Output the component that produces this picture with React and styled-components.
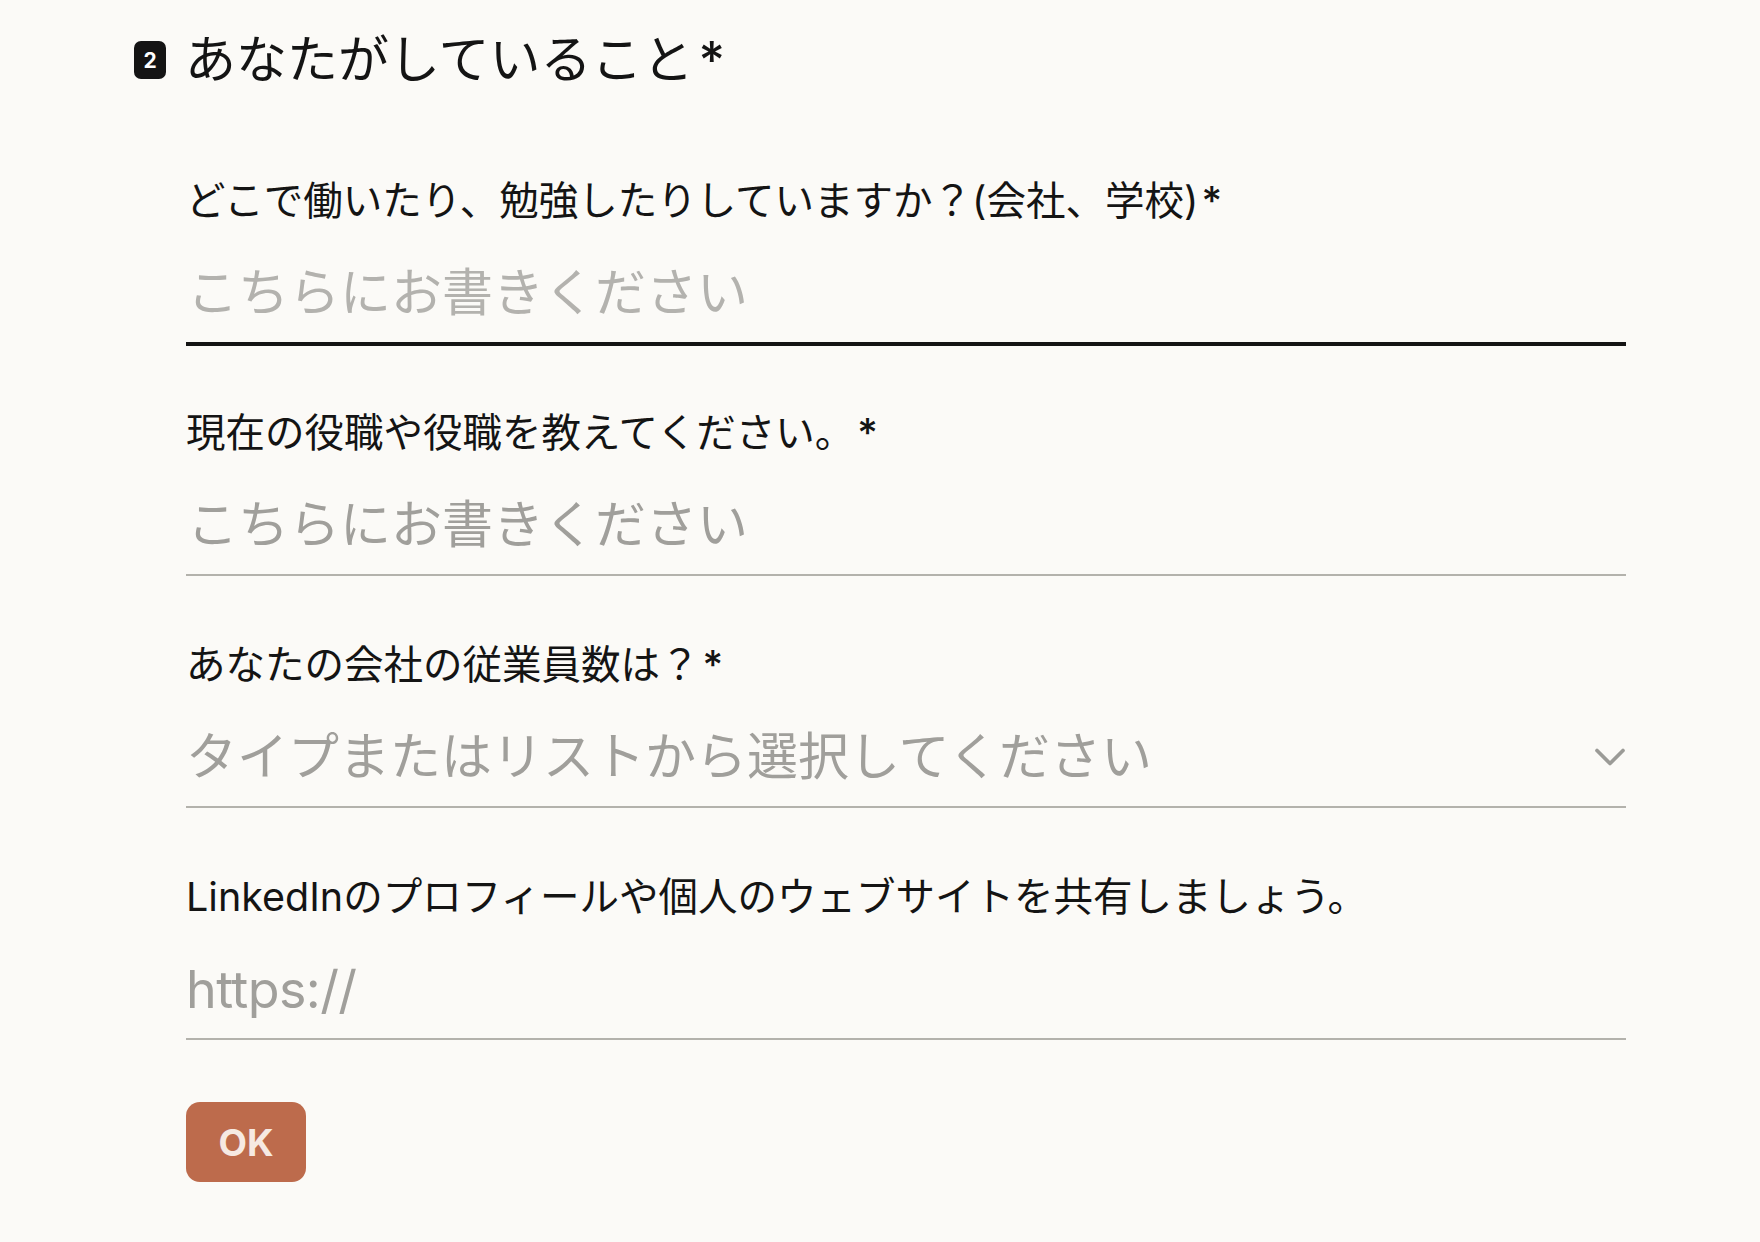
import React from 'react'
import styled, { createGlobalStyle } from 'styled-components'
import { ChevronDown } from 'lucide-react'

const GlobalStyle = createGlobalStyle`
  html, body {
    margin: 0;
    padding: 0;
    background: #fbfaf7;
  }
  body {
    font-family: Inter, "Noto Sans CJK JP", sans-serif;
    color: #141414;
  }
`

const Page = styled.div`
  width: 1760px;
  height: 1242px;
  overflow: hidden;
  padding: 28px 0 0 134px;
  box-sizing: border-box;
`

const Heading = styled.div`
  display: flex;
  align-items: center;
  height: 64px;
`

const Badge = styled.span`
  display: flex;
  align-items: center;
  justify-content: center;
  width: 32px;
  height: 38px;
  margin-right: 19px;
  border-radius: 7px;
  background: #141414;
  color: #fff;
  font-size: 21px;
  font-weight: 700;
`

const Title = styled.h1`
  margin: 0;
  font-size: 51px;
  font-weight: 400;
  line-height: 64px;
`

const Star = styled.span`
  margin-left: ${p => p.$gap || 3}px;
  font-weight: 500;
`

const Form = styled.div`
  width: 1440px;
  margin: 83px 0 0 52px;
  display: flex;
  flex-direction: column;
  gap: 63px;
`

const Field = styled.div`
  display: flex;
  flex-direction: column;
`

const Label = styled.div`
  font-size: 39.5px;
  font-weight: 400;
  line-height: 52px;
  white-space: nowrap;
`

const InputRow = styled.div`
  display: flex;
  align-items: center;
  justify-content: space-between;
  height: ${p => (p.$active ? 119 : 117)}px;
  margin-bottom: ${p => (p.$active ? -2 : 0)}px;
  padding: ${p => p.$top || 8}px 0 0 ${p => p.$left || 0}px;
  box-sizing: border-box;
  border-bottom: ${p => (p.$active ? '4px solid #141414' : '2px solid #b3b2ac')};
  color: ${p => (p.$active ? '#b3b2ae' : '#a09f9b')};
  font-size: ${p => p.$size || 51}px;
  font-weight: 400;
  letter-spacing: ${p => p.$tight || 0}px;
`

const Arrow = styled(ChevronDown)`
  width: 52px;
  height: 52px;
  margin: 8px -10px 0 0;
  color: #9b9b97;
`

const OkButton = styled.button`
  width: 120px;
  height: 80px;
  margin-top: -1px;
  padding: 0;
  border: 0;
  border-radius: 14px;
  background: #bd6b4c;
  color: #f6e9e2;
  font-family: Inter, sans-serif;
  font-size: 37px;
  font-weight: 700;
`

const App = () => {
  return (
    <>
      <GlobalStyle />
      <Page>
        <Heading>
          <Badge>2</Badge>
          <Title>あなたがしていること<Star $gap={5}>*</Star></Title>
        </Heading>
        <Form>
          <Field>
            <Label>どこで働いたり、勉強したりしていますか？(会社、学校)<Star>*</Star></Label>
            <InputRow $active $left={1}>こちらにお書きください</InputRow>
          </Field>
          <Field>
            <Label>現在の役職や役職を教えてください。<Star>*</Star></Label>
            <InputRow $left={1}>こちらにお書きください</InputRow>
          </Field>
          <Field>
            <Label>あなたの会社の従業員数は？<Star>*</Star></Label>
            <InputRow>
              タイプまたはリストから選択してください
              <Arrow strokeWidth={1.7} />
            </InputRow>
          </Field>
          <Field>
            <Label>LinkedInのプロフィールや個人のウェブサイトを共有しましょう。</Label>
            <InputRow $size={52} $tight={-0.6} $top={17}>https://</InputRow>
          </Field>
          <OkButton>OK</OkButton>
        </Form>
      </Page>
    </>
  )
}

export default App
